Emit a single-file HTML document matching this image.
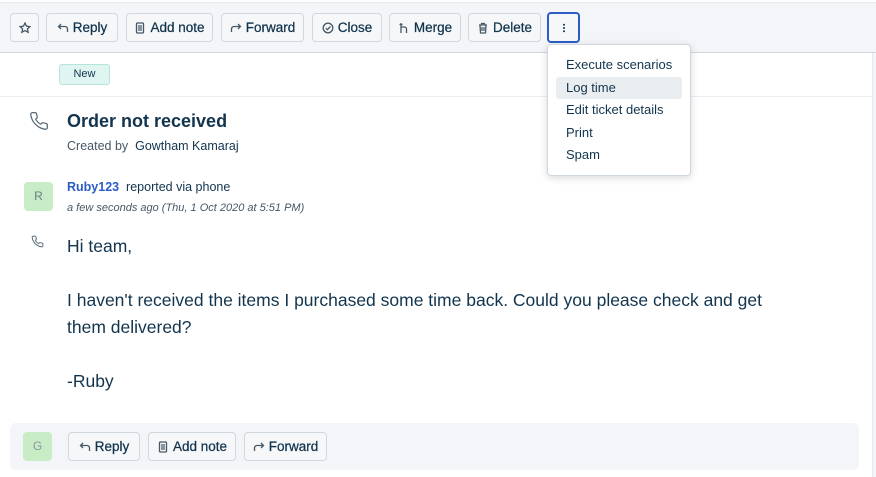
<!DOCTYPE html>
<html><head><meta charset="utf-8"><style>
*{box-sizing:border-box;margin:0;padding:0}
body{width:876px;height:477px;overflow:hidden;background:#fff;font-family:"Liberation Sans",sans-serif;color:#12344d;position:relative}
.abs{position:absolute}
.bar{left:0;top:2px;width:876px;height:51px;background:#f3f5f9;border-top:1px solid #e6eaee;border-bottom:1px solid #cfd7df}
.btn{position:absolute;height:29px;border:1px solid #cfd7df;border-radius:4px;background:#f5f7f9;font-size:13.5px;font-weight:normal;color:#12344d;display:flex;align-items:center;justify-content:center;gap:4px;white-space:nowrap;-webkit-text-stroke:0.25px #12344d}
.btn svg{width:12px;height:12px;stroke:#475867;fill:none;stroke-width:1.3}
.menu{left:547px;top:44px;width:144px;height:132px;background:#fff;border:1px solid #cfd7df;border-radius:4px;box-shadow:0 2px 8px rgba(0,0,0,.15);font-size:13px;color:#12344d}
.menu div{position:absolute;left:8px;width:126px;height:22px;padding-left:10px;line-height:22px;border-radius:3px}
</style></head><body>
<div class="abs bar"></div>
<div class="abs" style="left:872px;top:53px;width:4px;height:424px;background:#f3f5f9;border-left:1px solid #e6eaee"></div>
<div class="btn" style="left:10px;top:13px;width:29px"><svg viewBox="0 0 12 12"><path d="M6 1l1.5 3.2 3.4.4-2.5 2.3.7 3.4L6 8.6 2.9 10.3l.7-3.4L1.1 4.6l3.4-.4z"/></svg></div>
<div class="btn" style="left:46px;top:13px;width:72px"><svg viewBox="0 0 12 12"><path d="M4 2L1.5 4.5 4 7M1.5 4.5H8a2.5 2.5 0 0 1 2.5 2.5v3"/></svg>Reply</div>
<div class="btn" style="left:126px;top:13px;width:87px"><svg viewBox="0 0 12 12"><rect x="2.5" y="1" width="7" height="10" rx="1"/><path d="M4 4h4M4 6h4M4 8h4"/></svg>Add note</div>
<div class="btn" style="left:221px;top:13px;width:83px"><svg viewBox="0 0 12 12"><path d="M8 2l2.5 2.5L8 7M10.5 4.5H4A2.5 2.5 0 0 0 1.5 7v3"/></svg>Forward</div>
<div class="btn" style="left:312px;top:13px;width:70px"><svg viewBox="0 0 12 12"><circle cx="6" cy="6" r="4.8"/><path d="M3.8 6.2l1.6 1.5 3-3.2"/></svg>Close</div>
<div class="btn" style="left:389px;top:13px;width:72px"><svg viewBox="0 0 12 12"><path d="M3 1v10M3 5h3.5a2 2 0 0 1 2 2v4M1.5 2.5h3"/></svg>Merge</div>
<div class="btn" style="left:468px;top:13px;width:73px"><svg viewBox="0 0 12 12"><path d="M2 3h8M4.5 3V1.5h3V3M3 3l.5 8h5l.5-8M5 5v4M7 5v4"/></svg>Delete</div>
<div class="btn" style="left:547px;top:12px;width:33px;height:31px;border:2px solid #2c5cc5;background:#f5f7f9"><svg viewBox="0 0 12 12" style="stroke:none;fill:#12344d"><circle cx="6" cy="2.8" r="1"/><circle cx="6" cy="6" r="1"/><circle cx="6" cy="9.2" r="1"/></svg></div>
<div class="abs" style="left:0;top:96px;width:872px;height:1px;background:#ebeff3"></div>
<div class="abs" style="left:59px;top:64px;width:51px;height:21px;background:#e0f5f1;border:1px solid #b4e5da;border-radius:3px;font-size:11px;line-height:19px;text-align:center;color:#12344d">New</div>
<svg class="abs" style="left:29px;top:111px" width="20" height="20" viewBox="0 0 24 24" fill="none" stroke="#5a6b78" stroke-width="1.5"><path d="M22 16.9v3a2 2 0 0 1-2.2 2 19.8 19.8 0 0 1-8.6-3.1 19.5 19.5 0 0 1-6-6A19.8 19.8 0 0 1 2.1 4.2 2 2 0 0 1 4.1 2h3a2 2 0 0 1 2 1.7c.1.9.4 1.9.7 2.8a2 2 0 0 1-.5 2.1L8 9.9a16 16 0 0 0 6 6l1.3-1.3a2 2 0 0 1 2.1-.4c.9.3 1.8.6 2.8.7a2 2 0 0 1 1.7 2z"/></svg>
<div class="abs" style="left:67px;top:111px;font-size:18px;font-weight:bold;color:#12344d">Order not received</div>
<div class="abs" style="left:67px;top:139px;font-size:12.5px;color:#475867">Created by &nbsp;<span style="color:#12344d">Gowtham Kamaraj</span></div>
<div class="abs" style="left:24px;top:182px;width:29px;height:29px;background:#c8ecc6;border-radius:4px;font-size:12px;line-height:29px;text-align:center;color:#6f7c87">R</div>
<div class="abs" style="left:67px;top:180px;font-size:12.5px;color:#12344d"><span style="color:#2c5cc5;font-weight:bold">Ruby123</span>&nbsp; reported via phone</div>
<div class="abs" style="left:67px;top:202px;font-size:11px;font-style:italic;color:#475867">a few seconds ago (Thu, 1 Oct 2020 at 5:51 PM)</div>
<svg class="abs" style="left:31px;top:235px" width="13" height="13" viewBox="0 0 24 24" fill="none" stroke="#5a6b78" stroke-width="1.8"><path d="M22 16.9v3a2 2 0 0 1-2.2 2 19.8 19.8 0 0 1-8.6-3.1 19.5 19.5 0 0 1-6-6A19.8 19.8 0 0 1 2.1 4.2 2 2 0 0 1 4.1 2h3a2 2 0 0 1 2 1.7c.1.9.4 1.9.7 2.8a2 2 0 0 1-.5 2.1L8 9.9a16 16 0 0 0 6 6l1.3-1.3a2 2 0 0 1 2.1-.4c.9.3 1.8.6 2.8.7a2 2 0 0 1 1.7 2z"/></svg>
<div class="abs" style="left:67px;top:233px;font-size:17.5px;line-height:27px;color:#12344d;width:730px">Hi team,<br><br>I haven't received the items I purchased some time back. Could you please check and get<br>them delivered?<br><br>-Ruby</div>
<div class="abs" style="left:10px;top:423px;width:849px;height:47px;background:#f3f5f9;border-radius:6px"></div>
<div class="abs" style="left:23px;top:432px;width:29px;height:29px;background:#c8ecc6;border-radius:4px;font-size:12px;line-height:29px;text-align:center;color:#8a96a0">G</div>
<div class="btn" style="left:68px;top:432px;width:72px;height:29px"><svg viewBox="0 0 12 12"><path d="M4 2L1.5 4.5 4 7M1.5 4.5H8a2.5 2.5 0 0 1 2.5 2.5v3"/></svg>Reply</div>
<div class="btn" style="left:148px;top:432px;width:88px;height:29px"><svg viewBox="0 0 12 12"><rect x="2.5" y="1" width="7" height="10" rx="1"/><path d="M4 4h4M4 6h4M4 8h4"/></svg>Add note</div>
<div class="btn" style="left:244px;top:432px;width:83px;height:29px"><svg viewBox="0 0 12 12"><path d="M8 2l2.5 2.5L8 7M10.5 4.5H4A2.5 2.5 0 0 0 1.5 7v3"/></svg>Forward</div>
<div class="abs menu">
<div style="top:9px">Execute scenarios</div>
<div style="top:32px;background:#ebeef0">Log time</div>
<div style="top:54px">Edit ticket details</div>
<div style="top:77px">Print</div>
<div style="top:99px">Spam</div>
</div>
</body></html>
